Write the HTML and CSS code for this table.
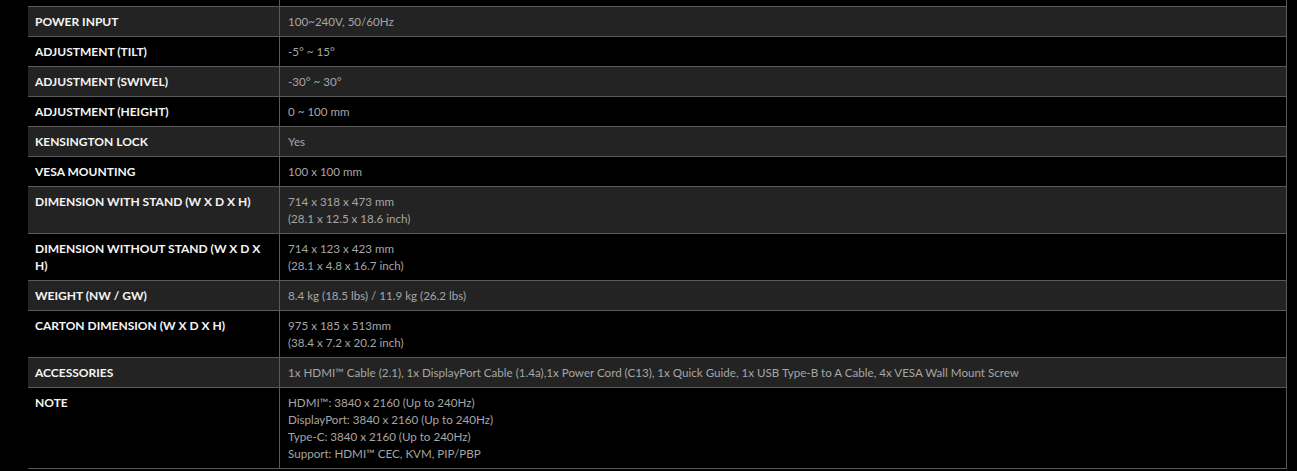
FILE: index.html
```html
<!DOCTYPE html>
<html lang="en">
  <head>
    <meta charset="UTF-8" />
    <meta name="viewport" content="width=device-width, initial-scale=1.0" />
    <title>Specifications</title>
    <link rel="stylesheet" href="styles.css">
  </head>
  <body>
    <div class="spec-wrap">
      <table class="spec-table">
        <tr class="cut-row">
          <td>&nbsp;</td>
          <td>&nbsp;</td>
        </tr>
        <tr>
          <td>POWER INPUT</td>
          <td>100~240V, 50/60Hz</td>
        </tr>
        <tr>
          <td>ADJUSTMENT (TILT)</td>
          <td>-5° ~ 15°</td>
        </tr>
        <tr>
          <td>ADJUSTMENT (SWIVEL)</td>
          <td>-30° ~ 30°</td>
        </tr>
        <tr>
          <td>ADJUSTMENT (HEIGHT)</td>
          <td>0 ~ 100 mm</td>
        </tr>
        <tr>
          <td>KENSINGTON LOCK</td>
          <td>Yes</td>
        </tr>
        <tr>
          <td>VESA MOUNTING</td>
          <td>100 x 100 mm</td>
        </tr>
        <tr>
          <td>DIMENSION WITH STAND (W X D X H)</td>
          <td>714 x 318 x 473 mm<br>(28.1 x 12.5 x 18.6 inch)</td>
        </tr>
        <tr>
          <td>DIMENSION WITHOUT STAND (W X D X H)</td>
          <td>714 x 123 x 423 mm<br>(28.1 x 4.8 x 16.7 inch)</td>
        </tr>
        <tr>
          <td>WEIGHT (NW / GW)</td>
          <td>8.4 kg (18.5 lbs) / 11.9 kg (26.2 lbs)</td>
        </tr>
        <tr>
          <td>CARTON DIMENSION (W X D X H)</td>
          <td>975 x 185 x 513mm<br>(38.4 x 7.2 x 20.2 inch)</td>
        </tr>
        <tr>
          <td>ACCESSORIES</td>
          <td>1x HDMI™ Cable (2.1), 1x DisplayPort Cable (1.4a),1x Power Cord (C13), 1x Quick Guide, 1x USB Type-B to A Cable, 4x VESA Wall Mount Screw</td>
        </tr>
        <tr>
          <td>NOTE</td>
          <td>HDMI™: 3840 x 2160 (Up to 240Hz)<br>DisplayPort: 3840 x 2160 (Up to 240Hz)<br>Type-C: 3840 x 2160 (Up to 240Hz)<br>Support: HDMI™ CEC, KVM, PIP/PBP</td>
        </tr>
      </table>
    </div>
  </body>
</html>
```

FILE: styles.css
```css
body {
  margin: 0;
  background-color: #000;
  font-family: Lato, "Open Sans", sans-serif;
  font-size: 11.6px;
  overflow: hidden;
}
.spec-wrap {
  padding: 0 10px 0 28px;
  margin-top: -23px;
}
.spec-table {
  width: 100%;
  border-collapse: collapse;
}
.spec-table td {
  padding: 6px 7px;
  line-height: 17px;
  vertical-align: top;
  border-right: 1px solid #5a5a5a;
  border-bottom: 1px solid #5a5a5a;
  color: #a6a6a6;
}
.spec-table td:first-child {
  width: 229px;
  padding-right: 15px;
  font-size: 12px;
  color: #f5f5f5;
  font-weight: bold;
  border-left: 0;
}
.spec-table td:last-child {
  padding-left: 8px;
}
.spec-table tr:nth-child(even) td {
  background-color: #232323;
}
.spec-table tr:nth-child(odd) td {
  background-color: #000;
}
```
